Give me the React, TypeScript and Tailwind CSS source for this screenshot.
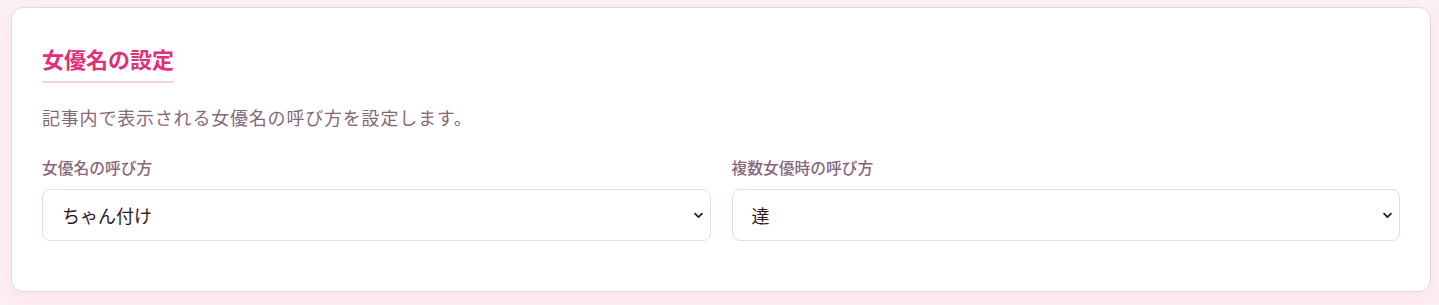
import React, { useState } from "react";

export default function App() {
  const [callStyle, setCallStyle] = useState("chan");
  const [plural, setPlural] = useState("tachi");

  return (
    <div
      className="min-h-[305px] bg-[#fcf0f4] pt-[7px] pr-[8px] pl-[11px]"
      style={{ fontFamily: '"Noto Sans CJK JP", "Noto Sans", sans-serif' }}
    >
      <div className="rounded-xl border border-[#ecd3df] bg-white px-[30px] pt-[33px] pb-[50px] shadow-[0_6px_18px_rgba(219,39,119,0.07)]">
        {/* 見出し */}
        <div className="inline-block border-b-2 border-[#efd3e2] pb-[6px]">
          <h2 className="text-[22px] leading-[34px] font-bold text-[#e0307a]">
            女優名の設定
          </h2>
        </div>

        <p className="mt-[21px] text-[18px] leading-[27px] tracking-[0.8px] text-[#876679]">
          記事内で表示される女優名の呼び方を設定します。
        </p>

        <div className="mt-[25px] grid grid-cols-2 gap-[21px]">
          <div>
            <label className="block text-[15.75px] leading-6 font-medium text-[#876679]">
              女優名の呼び方
            </label>
            <div className="relative mt-[9px]">
              <select
                value={callStyle}
                onChange={(e) => setCallStyle(e.target.value)}
                className="h-[52px] w-full appearance-none rounded-lg border border-[#ecd9e3] bg-white pl-[19px] pr-10 text-[18px] text-[#2b1a24] outline-none"
              >
                <option value="chan">ちゃん付け</option>
                <option value="san">さん付け</option>
                <option value="none">呼び捨て</option>
              </select>
              <Chevron />
            </div>
          </div>
          <div>
            <label className="block text-[15.75px] leading-6 font-medium text-[#876679]">
              複数女優時の呼び方
            </label>
            <div className="relative mt-[9px]">
              <select
                value={plural}
                onChange={(e) => setPlural(e.target.value)}
                className="h-[52px] w-full appearance-none rounded-lg border border-[#ecd9e3] bg-white pl-[19px] pr-10 text-[18px] text-[#2b1a24] outline-none"
              >
                <option value="tachi">達</option>
                <option value="ra">ら</option>
              </select>
              <Chevron />
            </div>
          </div>
        </div>
      </div>
    </div>
  );
}

function Chevron() {
  return (
    <svg
      className="pointer-events-none absolute top-1/2 right-[7px] -translate-y-1/2"
      width="11"
      height="11"
      viewBox="0 0 16 16"
      fill="none"
      stroke="#2b1a24"
      strokeWidth="2.6"
      strokeLinecap="round"
      strokeLinejoin="round"
    >
      <path d="M3 6l5 5 5-5" />
    </svg>
  );
}
